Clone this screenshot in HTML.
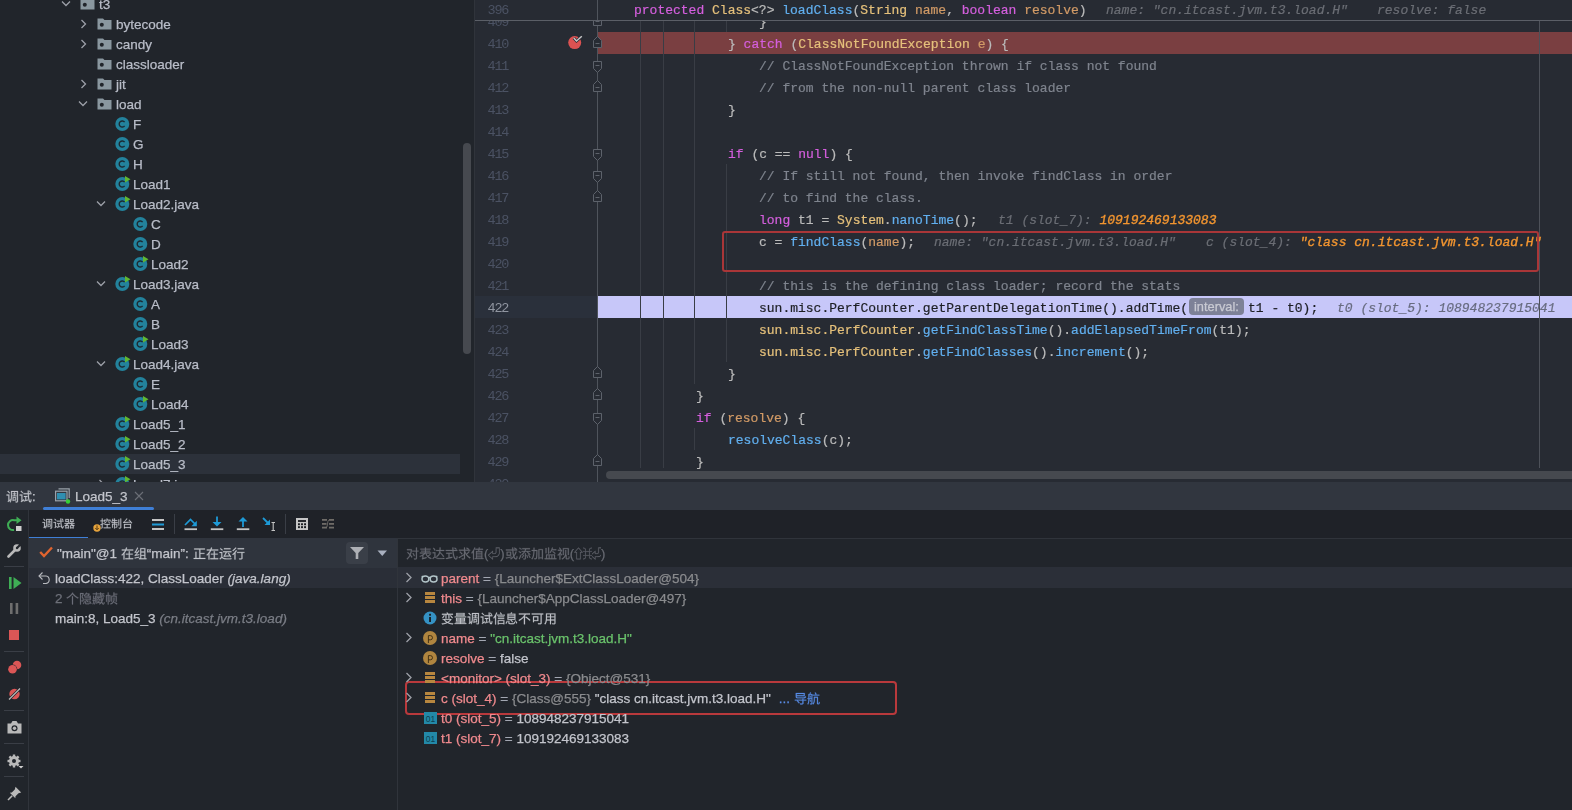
<!DOCTYPE html><html><head><meta charset='utf-8'><style>
*{box-sizing:border-box}
html,body{margin:0;padding:0}
body{width:1572px;height:810px;overflow:hidden;position:relative;background:#21252b;font-family:"Liberation Sans", sans-serif;}
.a{position:absolute}
.t,.m,.ln{will-change:transform}
.t{position:absolute;white-space:pre;font-family:"Liberation Sans", sans-serif;font-size:13.5px;line-height:20px;color:#b9bdc8;margin-top:1px;-webkit-text-stroke:0.25px currentColor}
.m{position:absolute;white-space:pre;font-family:"Liberation Mono", monospace;font-size:13px;line-height:22px;color:#bbbbbb;margin-top:2px;-webkit-text-stroke:0.2px currentColor}
.ln{position:absolute;white-space:pre;font-family:"Liberation Mono", monospace;font-size:13.5px;letter-spacing:-1.3px;line-height:22px;color:#4b5263;text-align:right;width:60px;left:449px;margin-top:2px}
.kw{color:#d55fde} .cl{color:#e5c07b} .fn{color:#61afef} .pr{color:#d19a66} .cm{color:#7f848e} .pl{color:#bbbbbb}
.hint{font-style:italic;color:#6b6e75} .hint2{font-style:italic;color:#686c80} .dk{color:#1d1f24} .hv{font-style:italic;color:#f29530;-webkit-text-stroke:0.35px currentColor}
</style></head><body><div class='a' style='left:0;top:0;width:474px;height:482px;background:#21252b;overflow:hidden'><div class='a' style='left:0;top:454px;width:460px;height:20px;background:#2c313a'></div><div class='a' style='left:463px;top:143px;width:8px;height:211px;border-radius:4px;background:#46494f'></div><svg class='a' style='left:61px;top:0px' width='10' height='7' viewBox='0 0 10 7'><path d='M1 1.5 L5 5.5 L9 1.5' fill='none' stroke='#9da0a8' stroke-width='1.3'/></svg><svg class='a' style='left:80px;top:-2px' width='15' height='12' viewBox='0 0 15 12'><path d='M0.5 0.5 H6 L7.5 2 H14.5 V11.5 H0.5 Z' fill='#8a979f'/><circle cx='4.8' cy='6.8' r='2' fill='#21252b'/></svg><div class='t' style='left:99px;top:-6px'>t3</div><svg class='a' style='left:80px;top:19px' width='7' height='10' viewBox='0 0 7 10'><path d='M1.5 1 L5.5 5 L1.5 9' fill='none' stroke='#9da0a8' stroke-width='1.3'/></svg><svg class='a' style='left:97px;top:18px' width='15' height='12' viewBox='0 0 15 12'><path d='M0.5 0.5 H6 L7.5 2 H14.5 V11.5 H0.5 Z' fill='#8a979f'/><circle cx='4.8' cy='6.8' r='2' fill='#21252b'/></svg><div class='t' style='left:116px;top:14px'>bytecode</div><svg class='a' style='left:80px;top:39px' width='7' height='10' viewBox='0 0 7 10'><path d='M1.5 1 L5.5 5 L1.5 9' fill='none' stroke='#9da0a8' stroke-width='1.3'/></svg><svg class='a' style='left:97px;top:38px' width='15' height='12' viewBox='0 0 15 12'><path d='M0.5 0.5 H6 L7.5 2 H14.5 V11.5 H0.5 Z' fill='#8a979f'/><circle cx='4.8' cy='6.8' r='2' fill='#21252b'/></svg><div class='t' style='left:116px;top:34px'>candy</div><svg class='a' style='left:97px;top:58px' width='15' height='12' viewBox='0 0 15 12'><path d='M0.5 0.5 H6 L7.5 2 H14.5 V11.5 H0.5 Z' fill='#8a979f'/><circle cx='4.8' cy='6.8' r='2' fill='#21252b'/></svg><div class='t' style='left:116px;top:54px'>classloader</div><svg class='a' style='left:80px;top:79px' width='7' height='10' viewBox='0 0 7 10'><path d='M1.5 1 L5.5 5 L1.5 9' fill='none' stroke='#9da0a8' stroke-width='1.3'/></svg><svg class='a' style='left:97px;top:78px' width='15' height='12' viewBox='0 0 15 12'><path d='M0.5 0.5 H6 L7.5 2 H14.5 V11.5 H0.5 Z' fill='#8a979f'/><circle cx='4.8' cy='6.8' r='2' fill='#21252b'/></svg><div class='t' style='left:116px;top:74px'>jit</div><svg class='a' style='left:78px;top:100px' width='10' height='7' viewBox='0 0 10 7'><path d='M1 1.5 L5 5.5 L9 1.5' fill='none' stroke='#9da0a8' stroke-width='1.3'/></svg><svg class='a' style='left:97px;top:98px' width='15' height='12' viewBox='0 0 15 12'><path d='M0.5 0.5 H6 L7.5 2 H14.5 V11.5 H0.5 Z' fill='#8a979f'/><circle cx='4.8' cy='6.8' r='2' fill='#21252b'/></svg><div class='t' style='left:116px;top:94px'>load</div><svg class='a' style='left:115px;top:116px' width='16' height='16' viewBox='0 0 16 16'><circle cx='7.3' cy='8' r='7' fill='#23829c'/><path d='M9.6 6.2 A3 3 0 1 0 9.6 9.8' fill='none' stroke='#1c2a33' stroke-width='1.4'/></svg><div class='t' style='left:133px;top:114px'>F</div><svg class='a' style='left:115px;top:136px' width='16' height='16' viewBox='0 0 16 16'><circle cx='7.3' cy='8' r='7' fill='#23829c'/><path d='M9.6 6.2 A3 3 0 1 0 9.6 9.8' fill='none' stroke='#1c2a33' stroke-width='1.4'/></svg><div class='t' style='left:133px;top:134px'>G</div><svg class='a' style='left:115px;top:156px' width='16' height='16' viewBox='0 0 16 16'><circle cx='7.3' cy='8' r='7' fill='#23829c'/><path d='M9.6 6.2 A3 3 0 1 0 9.6 9.8' fill='none' stroke='#1c2a33' stroke-width='1.4'/></svg><div class='t' style='left:133px;top:154px'>H</div><svg class='a' style='left:115px;top:176px' width='16' height='16' viewBox='0 0 16 16'><circle cx='7.3' cy='8' r='7' fill='#23829c'/><path d='M9.6 6.2 A3 3 0 1 0 9.6 9.8' fill='none' stroke='#1c2a33' stroke-width='1.4'/><path d='M10 0 L15.5 3.2 L10 6.4 Z' fill='#5fb832'/></svg><div class='t' style='left:133px;top:174px'>Load1</div><svg class='a' style='left:96px;top:200px' width='10' height='7' viewBox='0 0 10 7'><path d='M1 1.5 L5 5.5 L9 1.5' fill='none' stroke='#9da0a8' stroke-width='1.3'/></svg><svg class='a' style='left:115px;top:196px' width='16' height='16' viewBox='0 0 16 16'><circle cx='7.3' cy='8' r='7' fill='#23829c'/><path d='M9.6 6.2 A3 3 0 1 0 9.6 9.8' fill='none' stroke='#1c2a33' stroke-width='1.4'/><path d='M10 0 L15.5 3.2 L10 6.4 Z' fill='#5fb832'/></svg><div class='t' style='left:133px;top:194px'>Load2.java</div><svg class='a' style='left:133px;top:216px' width='16' height='16' viewBox='0 0 16 16'><circle cx='7.3' cy='8' r='7' fill='#23829c'/><path d='M9.6 6.2 A3 3 0 1 0 9.6 9.8' fill='none' stroke='#1c2a33' stroke-width='1.4'/></svg><div class='t' style='left:151px;top:214px'>C</div><svg class='a' style='left:133px;top:236px' width='16' height='16' viewBox='0 0 16 16'><circle cx='7.3' cy='8' r='7' fill='#23829c'/><path d='M9.6 6.2 A3 3 0 1 0 9.6 9.8' fill='none' stroke='#1c2a33' stroke-width='1.4'/></svg><div class='t' style='left:151px;top:234px'>D</div><svg class='a' style='left:133px;top:256px' width='16' height='16' viewBox='0 0 16 16'><circle cx='7.3' cy='8' r='7' fill='#23829c'/><path d='M9.6 6.2 A3 3 0 1 0 9.6 9.8' fill='none' stroke='#1c2a33' stroke-width='1.4'/><path d='M10 0 L15.5 3.2 L10 6.4 Z' fill='#5fb832'/></svg><div class='t' style='left:151px;top:254px'>Load2</div><svg class='a' style='left:96px;top:280px' width='10' height='7' viewBox='0 0 10 7'><path d='M1 1.5 L5 5.5 L9 1.5' fill='none' stroke='#9da0a8' stroke-width='1.3'/></svg><svg class='a' style='left:115px;top:276px' width='16' height='16' viewBox='0 0 16 16'><circle cx='7.3' cy='8' r='7' fill='#23829c'/><path d='M9.6 6.2 A3 3 0 1 0 9.6 9.8' fill='none' stroke='#1c2a33' stroke-width='1.4'/><path d='M10 0 L15.5 3.2 L10 6.4 Z' fill='#5fb832'/></svg><div class='t' style='left:133px;top:274px'>Load3.java</div><svg class='a' style='left:133px;top:296px' width='16' height='16' viewBox='0 0 16 16'><circle cx='7.3' cy='8' r='7' fill='#23829c'/><path d='M9.6 6.2 A3 3 0 1 0 9.6 9.8' fill='none' stroke='#1c2a33' stroke-width='1.4'/></svg><div class='t' style='left:151px;top:294px'>A</div><svg class='a' style='left:133px;top:316px' width='16' height='16' viewBox='0 0 16 16'><circle cx='7.3' cy='8' r='7' fill='#23829c'/><path d='M9.6 6.2 A3 3 0 1 0 9.6 9.8' fill='none' stroke='#1c2a33' stroke-width='1.4'/></svg><div class='t' style='left:151px;top:314px'>B</div><svg class='a' style='left:133px;top:336px' width='16' height='16' viewBox='0 0 16 16'><circle cx='7.3' cy='8' r='7' fill='#23829c'/><path d='M9.6 6.2 A3 3 0 1 0 9.6 9.8' fill='none' stroke='#1c2a33' stroke-width='1.4'/><path d='M10 0 L15.5 3.2 L10 6.4 Z' fill='#5fb832'/></svg><div class='t' style='left:151px;top:334px'>Load3</div><svg class='a' style='left:96px;top:360px' width='10' height='7' viewBox='0 0 10 7'><path d='M1 1.5 L5 5.5 L9 1.5' fill='none' stroke='#9da0a8' stroke-width='1.3'/></svg><svg class='a' style='left:115px;top:356px' width='16' height='16' viewBox='0 0 16 16'><circle cx='7.3' cy='8' r='7' fill='#23829c'/><path d='M9.6 6.2 A3 3 0 1 0 9.6 9.8' fill='none' stroke='#1c2a33' stroke-width='1.4'/><path d='M10 0 L15.5 3.2 L10 6.4 Z' fill='#5fb832'/></svg><div class='t' style='left:133px;top:354px'>Load4.java</div><svg class='a' style='left:133px;top:376px' width='16' height='16' viewBox='0 0 16 16'><circle cx='7.3' cy='8' r='7' fill='#23829c'/><path d='M9.6 6.2 A3 3 0 1 0 9.6 9.8' fill='none' stroke='#1c2a33' stroke-width='1.4'/></svg><div class='t' style='left:151px;top:374px'>E</div><svg class='a' style='left:133px;top:396px' width='16' height='16' viewBox='0 0 16 16'><circle cx='7.3' cy='8' r='7' fill='#23829c'/><path d='M9.6 6.2 A3 3 0 1 0 9.6 9.8' fill='none' stroke='#1c2a33' stroke-width='1.4'/><path d='M10 0 L15.5 3.2 L10 6.4 Z' fill='#5fb832'/></svg><div class='t' style='left:151px;top:394px'>Load4</div><svg class='a' style='left:115px;top:416px' width='16' height='16' viewBox='0 0 16 16'><circle cx='7.3' cy='8' r='7' fill='#23829c'/><path d='M9.6 6.2 A3 3 0 1 0 9.6 9.8' fill='none' stroke='#1c2a33' stroke-width='1.4'/><path d='M10 0 L15.5 3.2 L10 6.4 Z' fill='#5fb832'/></svg><div class='t' style='left:133px;top:414px'>Load5_1</div><svg class='a' style='left:115px;top:436px' width='16' height='16' viewBox='0 0 16 16'><circle cx='7.3' cy='8' r='7' fill='#23829c'/><path d='M9.6 6.2 A3 3 0 1 0 9.6 9.8' fill='none' stroke='#1c2a33' stroke-width='1.4'/><path d='M10 0 L15.5 3.2 L10 6.4 Z' fill='#5fb832'/></svg><div class='t' style='left:133px;top:434px'>Load5_2</div><svg class='a' style='left:115px;top:456px' width='16' height='16' viewBox='0 0 16 16'><circle cx='7.3' cy='8' r='7' fill='#23829c'/><path d='M9.6 6.2 A3 3 0 1 0 9.6 9.8' fill='none' stroke='#1c2a33' stroke-width='1.4'/><path d='M10 0 L15.5 3.2 L10 6.4 Z' fill='#5fb832'/></svg><div class='t' style='left:133px;top:454px'>Load5_3</div><svg class='a' style='left:98px;top:479px' width='7' height='10' viewBox='0 0 7 10'><path d='M1.5 1 L5.5 5 L1.5 9' fill='none' stroke='#9da0a8' stroke-width='1.3'/></svg><svg class='a' style='left:115px;top:476px' width='16' height='16' viewBox='0 0 16 16'><circle cx='7.3' cy='8' r='7' fill='#23829c'/><path d='M9.6 6.2 A3 3 0 1 0 9.6 9.8' fill='none' stroke='#1c2a33' stroke-width='1.4'/><path d='M10 0 L15.5 3.2 L10 6.4 Z' fill='#5fb832'/></svg><div class='t' style='left:133px;top:474px'>Load7.java</div></div><div class='a' style='left:474px;top:0;width:1px;height:482px;background:#30343b'></div><div class='a' style='left:475px;top:0;width:1097px;height:482px;background:#272b33;overflow:hidden'><div class='a' style='left:123px;top:32px;width:1000px;height:22px;background:#7a3f41'></div><div class='a' style='left:0px;top:296px;width:122px;height:22px;background:#2a303b'></div><div class='a' style='left:123px;top:296px;width:1000px;height:22px;background:#c7c7f9'></div><div class='a' style='left:165px;top:20px;width:1px;height:448px;background:#393d45'></div><div class='a' style='left:188px;top:20px;width:1px;height:448px;background:#393d45'></div><div class='a' style='left:219px;top:20px;width:1px;height:364px;background:#393d45'></div><div class='a' style='left:219px;top:428px;width:1px;height:22px;background:#393d45'></div><div class='a' style='left:251px;top:20px;width:1px;height:12px;background:#393d45'></div><div class='a' style='left:251px;top:164px;width:1px;height:198px;background:#393d45'></div><div class='a' style='left:1064px;top:20px;width:1px;height:448px;background:#4d5159'></div><div class='a' style='left:122px;top:0px;width:1px;height:482px;background:#4f545c'></div><svg class='a' style='left:117px;top:14px' width='11' height='13' viewBox='0 0 11 13'><path d='M1.5 4.5 L5.5 0.5 L9.5 4.5 V11.5 H1.5 Z' fill='#272b33' stroke='#5d626b' stroke-width='1'/><path d='M3.5 7.5 H7.5' stroke='#5d626b' stroke-width='1'/></svg><svg class='a' style='left:117px;top:36px' width='11' height='13' viewBox='0 0 11 13'><path d='M1.5 4.5 L5.5 0.5 L9.5 4.5 V11.5 H1.5 Z' fill='#272b33' stroke='#5d626b' stroke-width='1'/><path d='M3.5 7.5 H7.5' stroke='#5d626b' stroke-width='1'/></svg><svg class='a' style='left:117px;top:80px' width='11' height='13' viewBox='0 0 11 13'><path d='M1.5 4.5 L5.5 0.5 L9.5 4.5 V11.5 H1.5 Z' fill='#272b33' stroke='#5d626b' stroke-width='1'/><path d='M3.5 7.5 H7.5' stroke='#5d626b' stroke-width='1'/></svg><svg class='a' style='left:117px;top:190px' width='11' height='13' viewBox='0 0 11 13'><path d='M1.5 4.5 L5.5 0.5 L9.5 4.5 V11.5 H1.5 Z' fill='#272b33' stroke='#5d626b' stroke-width='1'/><path d='M3.5 7.5 H7.5' stroke='#5d626b' stroke-width='1'/></svg><svg class='a' style='left:117px;top:366px' width='11' height='13' viewBox='0 0 11 13'><path d='M1.5 4.5 L5.5 0.5 L9.5 4.5 V11.5 H1.5 Z' fill='#272b33' stroke='#5d626b' stroke-width='1'/><path d='M3.5 7.5 H7.5' stroke='#5d626b' stroke-width='1'/></svg><svg class='a' style='left:117px;top:388px' width='11' height='13' viewBox='0 0 11 13'><path d='M1.5 4.5 L5.5 0.5 L9.5 4.5 V11.5 H1.5 Z' fill='#272b33' stroke='#5d626b' stroke-width='1'/><path d='M3.5 7.5 H7.5' stroke='#5d626b' stroke-width='1'/></svg><svg class='a' style='left:117px;top:454px' width='11' height='13' viewBox='0 0 11 13'><path d='M1.5 4.5 L5.5 0.5 L9.5 4.5 V11.5 H1.5 Z' fill='#272b33' stroke='#5d626b' stroke-width='1'/><path d='M3.5 7.5 H7.5' stroke='#5d626b' stroke-width='1'/></svg><svg class='a' style='left:117px;top:61px' width='11' height='13' viewBox='0 0 11 13'><path d='M1.5 0.5 H9.5 V7.5 L5.5 11.5 L1.5 7.5 Z' fill='#272b33' stroke='#5d626b' stroke-width='1'/><path d='M3.5 4.5 H7.5' stroke='#5d626b' stroke-width='1'/></svg><svg class='a' style='left:117px;top:149px' width='11' height='13' viewBox='0 0 11 13'><path d='M1.5 0.5 H9.5 V7.5 L5.5 11.5 L1.5 7.5 Z' fill='#272b33' stroke='#5d626b' stroke-width='1'/><path d='M3.5 4.5 H7.5' stroke='#5d626b' stroke-width='1'/></svg><svg class='a' style='left:117px;top:171px' width='11' height='13' viewBox='0 0 11 13'><path d='M1.5 0.5 H9.5 V7.5 L5.5 11.5 L1.5 7.5 Z' fill='#272b33' stroke='#5d626b' stroke-width='1'/><path d='M3.5 4.5 H7.5' stroke='#5d626b' stroke-width='1'/></svg><svg class='a' style='left:117px;top:413px' width='11' height='13' viewBox='0 0 11 13'><path d='M1.5 0.5 H9.5 V7.5 L5.5 11.5 L1.5 7.5 Z' fill='#272b33' stroke='#5d626b' stroke-width='1'/><path d='M3.5 4.5 H7.5' stroke='#5d626b' stroke-width='1'/></svg><div class='ln' style='left:-27.5px;top:10px;color:#4b5263'>409</div><div class='ln' style='left:-27.5px;top:32px;color:#4b5263'>410</div><div class='ln' style='left:-27.5px;top:54px;color:#4b5263'>411</div><div class='ln' style='left:-27.5px;top:76px;color:#4b5263'>412</div><div class='ln' style='left:-27.5px;top:98px;color:#4b5263'>413</div><div class='ln' style='left:-27.5px;top:120px;color:#4b5263'>414</div><div class='ln' style='left:-27.5px;top:142px;color:#4b5263'>415</div><div class='ln' style='left:-27.5px;top:164px;color:#4b5263'>416</div><div class='ln' style='left:-27.5px;top:186px;color:#4b5263'>417</div><div class='ln' style='left:-27.5px;top:208px;color:#4b5263'>418</div><div class='ln' style='left:-27.5px;top:230px;color:#4b5263'>419</div><div class='ln' style='left:-27.5px;top:252px;color:#4b5263'>420</div><div class='ln' style='left:-27.5px;top:274px;color:#4b5263'>421</div><div class='ln' style='left:-27.5px;top:296px;color:#9095a0'>422</div><div class='ln' style='left:-27.5px;top:318px;color:#4b5263'>423</div><div class='ln' style='left:-27.5px;top:340px;color:#4b5263'>424</div><div class='ln' style='left:-27.5px;top:362px;color:#4b5263'>425</div><div class='ln' style='left:-27.5px;top:384px;color:#4b5263'>426</div><div class='ln' style='left:-27.5px;top:406px;color:#4b5263'>427</div><div class='ln' style='left:-27.5px;top:428px;color:#4b5263'>428</div><div class='ln' style='left:-27.5px;top:450px;color:#4b5263'>429</div><div class='ln' style='left:-27.5px;top:472px;color:#4b5263'>430</div><div class='m' style='left:283.8px;top:10px'><span class='pl'>}</span></div><div class='m' style='left:252.6px;top:32px'><span class='pl'>} </span><span class='kw'>catch</span><span class='pl'> (</span><span class='cl'>ClassNotFoundException</span><span class='pr'> e</span><span class='pl'>) {</span></div><div class='m' style='left:283.8px;top:54px'><span class='cm'>// ClassNotFoundException thrown if class not found</span></div><div class='m' style='left:283.8px;top:76px'><span class='cm'>// from the non-null parent class loader</span></div><div class='m' style='left:252.6px;top:98px'><span class='pl'>}</span></div><div class='m' style='left:252.6px;top:142px'><span class='kw'>if</span><span class='pl'> (c == </span><span class='kw'>null</span><span class='pl'>) {</span></div><div class='m' style='left:283.8px;top:164px'><span class='cm'>// If still not found, then invoke findClass in order</span></div><div class='m' style='left:283.8px;top:186px'><span class='cm'>// to find the class.</span></div><div class='m' style='left:283.8px;top:208px'><span class='kw'>long</span><span class='pl'> t1 = </span><span class='cl'>System</span><span class='pl'>.</span><span class='fn'>nanoTime</span><span class='pl'>();</span></div><div class='m' style='left:283.8px;top:230px'><span class='pl'>c = </span><span class='fn'>findClass</span><span class='pl'>(</span><span class='pr'>name</span><span class='pl'>);</span></div><div class='m' style='left:283.8px;top:274px'><span class='cm'>// this is the defining class loader; record the stats</span></div><div class='m' style='left:283.8px;top:296px'><span class='dk'>sun.misc.PerfCounter.getParentDelegationTime().addTime(</span></div><div class='m' style='left:283.8px;top:318px'><span class='cl'>sun.misc.PerfCounter</span><span class='pl'>.</span><span class='fn'>getFindClassTime</span><span class='pl'>().</span><span class='fn'>addElapsedTimeFrom</span><span class='pl'>(t1);</span></div><div class='m' style='left:283.8px;top:340px'><span class='cl'>sun.misc.PerfCounter</span><span class='pl'>.</span><span class='fn'>getFindClasses</span><span class='pl'>().</span><span class='fn'>increment</span><span class='pl'>();</span></div><div class='m' style='left:252.6px;top:362px'><span class='pl'>}</span></div><div class='m' style='left:221.4px;top:384px'><span class='pl'>}</span></div><div class='m' style='left:221.4px;top:406px'><span class='kw'>if</span><span class='pl'> (</span><span class='pr'>resolve</span><span class='pl'>) {</span></div><div class='m' style='left:252.6px;top:428px'><span class='fn'>resolveClass</span><span class='pl'>(c);</span></div><div class='m' style='left:221.4px;top:450px'><span class='pl'>}</span></div><div class='m' style='left:522.5px;top:208px'><span class='hint'>t1 (slot_7): </span><span class='hv'>109192469133083</span></div><div class='m' style='left:459.4px;top:230px'><span class='hint'>name: "cn.itcast.jvm.t3.load.H"</span></div><div class='m' style='left:730.6px;top:230px'><span class='hint'>c (slot_4): </span><span class='hv'>"class cn.itcast.jvm.t3.load.H"</span></div><div class='a' style='left:714px;top:298px;width:55px;height:17px;border-radius:4px;background:#7d8197'></div><div class='t' style='left:719px;top:296px;font-size:12.8px;color:#c9cad3'>interval:</div><div class='m' style='left:772.5px;top:296px'><span class='dk'>t1 - t0);</span></div><div class='m' style='left:861.6px;top:296px'><span class='hint2'>t0 (slot_5): 108948237915041</span></div><div class='a' style='left:247px;top:231px;width:817px;height:41px;border:2px solid #a93638;border-radius:3px'></div><div class='a' style='left:0;top:0;width:1097px;height:20px;background:#272b33'></div><div class='a' style='left:122px;top:0px;width:1px;height:20px;background:#4f545c'></div><div class='a' style='left:0;top:20px;width:1097px;height:1px;background:#5b5f67'></div><div class='ln' style='left:-27.5px;top:-2px'>396</div><div class='m' style='left:159.0px;top:-2px'><span class='kw'>protected</span> <span class='cl'>Class</span><span class='pl'>&lt;?&gt; </span><span class='fn'>loadClass</span><span class='pl'>(</span><span class='cl'>String</span><span class='pr'> name</span><span class='pl'>, </span><span class='kw'>boolean</span><span class='pr'> resolve</span><span class='pl'>)</span></div><div class='m' style='left:630.5px;top:-2px'><span class='hint'>name: "cn.itcast.jvm.t3.load.H"</span></div><div class='m' style='left:901.6px;top:-2px'><span class='hint'>resolve: false</span></div><svg class='a' style='left:92px;top:34px' width='18' height='16' viewBox='0 0 18 16'><circle cx='7.7' cy='8.6' r='6.5' fill='#db5252'/><path d='M6.8 4 L9.5 7 L14.8 2.3' fill='none' stroke='#272b33' stroke-width='3'/><path d='M6.8 4 L9.5 7 L14.8 2.3' fill='none' stroke='#c6c6c8' stroke-width='1.5'/></svg><div class='a' style='left:131px;top:471px;width:1000px;height:8px;border-radius:4px;background:#46494f'></div></div><div class='a' style='left:0;top:482px;width:1572px;height:28px;background:#31363f'></div><div class='t' style='left:6px;top:486px;font-size:13px;color:#c3c5cc'><svg style='display:inline-block;vertical-align:-1.56px' width='13' height='13' viewBox='0 0 1000 1000'><path d='M105 108C159 154 226 221 256 265L309 212C277 170 209 106 154 62ZM43 354V426H184V773C184 826 148 865 128 881C142 892 166 917 175 932C188 915 212 895 345 789C331 836 311 880 283 919C298 927 327 948 338 959C436 823 450 612 450 458V152H856V869C856 884 851 889 836 889C822 890 775 890 723 888C733 907 744 938 747 957C818 957 861 956 888 945C915 932 924 910 924 870V85H383V458C383 553 380 664 352 767C344 752 335 731 330 716L257 772V354ZM620 182V266H512V324H620V426H490V483H818V426H681V324H793V266H681V182ZM512 565V845H570V799H781V565ZM570 621H723V742H570Z' fill='currentColor' stroke='currentColor' stroke-width='18'/></svg><svg style='display:inline-block;vertical-align:-1.56px' width='13' height='13' viewBox='0 0 1000 1000'><path d='M120 105C171 149 235 213 265 254L317 202C287 162 222 102 170 59ZM777 84C819 128 865 189 885 229L940 192C918 153 871 95 829 52ZM50 354V426H189V786C189 829 159 858 141 869C154 884 172 916 179 934C194 916 221 898 392 783C385 768 376 739 371 719L260 791V354ZM671 45 677 248H346V320H680C698 697 745 954 869 957C907 957 947 915 967 746C953 740 921 720 907 705C901 803 889 859 871 859C809 856 770 629 754 320H959V248H751C749 183 747 115 747 45ZM360 819 381 890C465 865 574 833 679 802L669 735L552 768V536H646V466H378V536H483V787Z' fill='currentColor' stroke='currentColor' stroke-width='18'/></svg>:</div><svg class='a' style='left:55px;top:488px' width='17' height='16' viewBox='0 0 17 16'><path d='M3.5 0.8 H14.2 V10' fill='none' stroke='#9aa3ab' stroke-width='1.2'/><rect x='0.6' y='3.2' width='11.4' height='9.6' fill='none' stroke='#9aa3ab' stroke-width='1.2'/><rect x='2' y='5' width='8.6' height='6.4' fill='#2f8fb0'/><circle cx='13' cy='13.5' r='2.2' fill='#35d035'/></svg><div class='t' style='left:75px;top:486px;color:#c3c5cc'>Load5_3</div><svg class='a' style='left:134px;top:491px' width='10' height='10' viewBox='0 0 10 10'><path d='M1 1 L9 9 M9 1 L1 9' stroke='#6b6f77' stroke-width='1.1'/></svg><div class='a' style='left:43px;top:507px;width:111px;height:3px;border-radius:2px;background:#3f7fd6'></div><div class='a' style='left:28px;top:510px;width:1px;height:300px;background:#30343b'></div><div class='a' style='left:4px;top:566px;width:20px;height:1px;background:#3a3e46'></div><div class='a' style='left:4px;top:651px;width:20px;height:1px;background:#3a3e46'></div><div class='a' style='left:4px;top:710px;width:20px;height:1px;background:#3a3e46'></div><div class='a' style='left:4px;top:743px;width:20px;height:1px;background:#3a3e46'></div><div class='a' style='left:4px;top:776px;width:20px;height:1px;background:#3a3e46'></div><svg class='a' style='left:7px;top:516px' width='16' height='16' viewBox='0 0 16 16'><path d='M10.5 4.2 H7 A5 5 0 1 0 7 14' fill='none' stroke='#3fae55' stroke-width='2'/><path d='M9.5 0.5 L14.5 4.3 L9.5 8 Z' fill='#3fae55'/><rect x='9' y='10' width='5.5' height='5' fill='#cfcfcf'/></svg><svg class='a' style='left:7px;top:543px' width='15' height='15' viewBox='0 0 15 15'><path d='M1.5 13.5 L8 7' stroke='#b9b9b9' stroke-width='2.6' stroke-linecap='round'/><circle cx='10' cy='5' r='3.8' fill='#b9b9b9'/><path d='M10 5 L14 1' stroke='#21252b' stroke-width='2.2'/><circle cx='10' cy='5' r='1.2' fill='#21252b'/></svg><svg class='a' style='left:9px;top:577px' width='13' height='12' viewBox='0 0 13 12'><rect x='0' y='0' width='2.6' height='12' fill='#3fae55'/><path d='M4.5 0 L12.5 6 L4.5 12 Z' fill='#3fae55'/></svg><svg class='a' style='left:10px;top:603px' width='9' height='11' viewBox='0 0 9 11'><rect x='0' y='0' width='2.6' height='11' fill='#6e6e6e'/><rect x='5.6' y='0' width='2.6' height='11' fill='#6e6e6e'/></svg><div class='a' style='left:9px;top:630px;width:10px;height:10px;background:#db5656'></div><svg class='a' style='left:7px;top:660px' width='15' height='15' viewBox='0 0 15 15'><circle cx='10' cy='5' r='4.3' fill='#db5656'/><circle cx='5.5' cy='9.3' r='4.8' fill='#21252b'/><circle cx='5.5' cy='9.3' r='4.3' fill='#db5656'/></svg><svg class='a' style='left:7px;top:687px' width='15' height='14' viewBox='0 0 15 14'><circle cx='7.5' cy='7' r='5.2' fill='#db5656'/><path d='M2 12.5 L13 1.5' stroke='#21252b' stroke-width='2.6'/><path d='M2 12.5 L13 1.5' stroke='#b9b9b9' stroke-width='1.2'/></svg><svg class='a' style='left:7px;top:720px' width='15' height='14' viewBox='0 0 15 14'><path d='M0.5 3.5 H4 L5.5 1 H9.5 L11 3.5 H14.5 V13.5 H0.5 Z' fill='#b9b9b9'/><circle cx='7.5' cy='8.2' r='3' fill='#21252b'/><circle cx='7.5' cy='8.2' r='1.7' fill='#b9b9b9'/></svg><svg class='a' style='left:7px;top:754px' width='17' height='16' viewBox='0 0 17 16'><g fill='#b9b9b9'><circle cx='7' cy='7' r='5'/><rect x='5.8' y='0.5' width='2.4' height='13'/><rect x='0.5' y='5.8' width='13' height='2.4'/><rect x='5.8' y='0.5' width='2.4' height='13' transform='rotate(45 7 7)'/><rect x='5.8' y='0.5' width='2.4' height='13' transform='rotate(-45 7 7)'/></g><circle cx='7' cy='7' r='2' fill='#21252b'/><path d='M11.5 12 H16.5 L14 14.5 Z' fill='#d0d0d0'/></svg><svg class='a' style='left:7px;top:786px' width='15' height='15' viewBox='0 0 15 15'><path d='M8.5 0.8 L14.2 6.5 L11.5 7.2 L8.5 10.2 L8.3 12.2 L2.8 6.7 L4.8 6.5 L7.8 3.5 Z' fill='#b9b9b9'/><path d='M1 14 L5.2 9.8' stroke='#b9b9b9' stroke-width='1.6'/></svg><div class='a' style='left:29px;top:510px;width:1543px;height:28px;background:#1f2228'></div><div class='t' style='left:42px;top:513px;font-size:11px;color:#c3c5cc'><svg style='display:inline-block;vertical-align:-1.32px' width='11' height='11' viewBox='0 0 1000 1000'><path d='M105 108C159 154 226 221 256 265L309 212C277 170 209 106 154 62ZM43 354V426H184V773C184 826 148 865 128 881C142 892 166 917 175 932C188 915 212 895 345 789C331 836 311 880 283 919C298 927 327 948 338 959C436 823 450 612 450 458V152H856V869C856 884 851 889 836 889C822 890 775 890 723 888C733 907 744 938 747 957C818 957 861 956 888 945C915 932 924 910 924 870V85H383V458C383 553 380 664 352 767C344 752 335 731 330 716L257 772V354ZM620 182V266H512V324H620V426H490V483H818V426H681V324H793V266H681V182ZM512 565V845H570V799H781V565ZM570 621H723V742H570Z' fill='currentColor' stroke='currentColor' stroke-width='18'/></svg><svg style='display:inline-block;vertical-align:-1.32px' width='11' height='11' viewBox='0 0 1000 1000'><path d='M120 105C171 149 235 213 265 254L317 202C287 162 222 102 170 59ZM777 84C819 128 865 189 885 229L940 192C918 153 871 95 829 52ZM50 354V426H189V786C189 829 159 858 141 869C154 884 172 916 179 934C194 916 221 898 392 783C385 768 376 739 371 719L260 791V354ZM671 45 677 248H346V320H680C698 697 745 954 869 957C907 957 947 915 967 746C953 740 921 720 907 705C901 803 889 859 871 859C809 856 770 629 754 320H959V248H751C749 183 747 115 747 45ZM360 819 381 890C465 865 574 833 679 802L669 735L552 768V536H646V466H378V536H483V787Z' fill='currentColor' stroke='currentColor' stroke-width='18'/></svg><svg style='display:inline-block;vertical-align:-1.32px' width='11' height='11' viewBox='0 0 1000 1000'><path d='M196 150H366V291H196ZM622 150H802V291H622ZM614 396C656 412 706 437 740 460H452C475 428 495 395 511 362L437 348V85H128V356H431C415 391 392 426 364 460H52V527H298C230 587 141 641 30 682C45 696 64 722 72 739L128 715V960H198V931H365V954H437V651H246C305 613 355 571 396 527H582C624 573 679 616 739 651H555V960H624V931H802V954H875V716L924 732C934 714 955 686 972 672C863 646 751 592 675 527H949V460H774L801 431C768 405 704 374 653 356ZM553 85V356H875V85ZM198 865V717H365V865ZM624 865V717H802V865Z' fill='currentColor' stroke='currentColor' stroke-width='18'/></svg></div><div class='a' style='left:29px;top:537px;width:59px;height:2px;background:#3f7fd6'></div><div class='t' style='left:100px;top:513px;font-size:11px;color:#c3c5cc'><svg style='display:inline-block;vertical-align:-1.32px' width='11' height='11' viewBox='0 0 1000 1000'><path d='M695 327C758 384 843 465 884 511L933 462C889 417 804 340 741 286ZM560 287C513 353 440 420 370 465C384 478 408 508 417 522C489 470 572 389 626 311ZM164 39V234H43V305H164V544C114 561 68 575 32 586L49 661L164 619V864C164 878 159 882 147 882C135 883 96 883 53 882C63 902 72 933 74 951C137 952 177 949 200 938C225 926 234 905 234 864V594L342 555L330 486L234 520V305H338V234H234V39ZM332 860V927H964V860H689V609H893V542H413V609H613V860ZM588 57C602 88 619 128 631 161H367V336H435V227H882V326H954V161H712C700 126 678 78 658 39Z' fill='currentColor' stroke='currentColor' stroke-width='18'/></svg><svg style='display:inline-block;vertical-align:-1.32px' width='11' height='11' viewBox='0 0 1000 1000'><path d='M676 132V686H747V132ZM854 50V857C854 873 849 878 834 878C815 879 759 879 700 877C710 900 721 935 725 956C800 956 855 954 885 942C916 928 928 906 928 856V50ZM142 64C121 161 87 261 41 328C60 335 93 348 108 356C125 327 142 292 158 253H289V358H45V427H289V529H91V878H159V597H289V959H361V597H500V802C500 813 497 816 486 816C475 817 442 817 400 815C409 834 418 861 421 881C476 881 515 880 538 869C563 857 569 838 569 804V529H361V427H604V358H361V253H565V184H361V44H289V184H183C194 150 204 114 212 78Z' fill='currentColor' stroke='currentColor' stroke-width='18'/></svg><svg style='display:inline-block;vertical-align:-1.32px' width='11' height='11' viewBox='0 0 1000 1000'><path d='M179 538V959H255V905H741V957H821V538ZM255 832V610H741V832ZM126 454C165 439 224 437 800 406C825 437 846 466 861 492L925 446C873 362 756 239 658 153L599 193C647 236 699 289 745 340L231 364C320 282 410 179 490 69L415 36C336 160 219 287 183 321C149 354 124 375 101 380C110 400 122 438 126 454Z' fill='currentColor' stroke='currentColor' stroke-width='18'/></svg></div><svg class='a' style='left:93px;top:524px' width='8' height='8' viewBox='0 0 8 8'><circle cx='4' cy='4' r='3.7' fill='#e5a33c'/><path d='M4 1.5 V5.5 M2.3 4 L4 5.8 L5.7 4' fill='none' stroke='#5a3c10' stroke-width='1'/></svg><svg class='a' style='left:152px;top:518px' width='13' height='13' viewBox='0 0 13 13'><rect x='0' y='1' width='12' height='2' fill='#c4c4c4'/><rect x='0' y='5.5' width='12' height='2' fill='#1e9ad6'/><rect x='0' y='10' width='12' height='2' fill='#c4c4c4'/></svg><div class='a' style='left:174px;top:514px;width:1px;height:20px;background:#3a3e46'></div><div class='a' style='left:285px;top:514px;width:1px;height:20px;background:#3a3e46'></div><svg class='a' style='left:184px;top:517px' width='14' height='14' viewBox='0 0 14 14'><path d='M1 8 L6.5 2.5 L11 7' fill='none' stroke='#1e9ad6' stroke-width='1.7'/><path d='M12.8 3.8 V9.2 H7.4 Z' fill='#1e9ad6'/><rect x='0.5' y='11.3' width='12.5' height='1.8' fill='#c4c4c4'/></svg><svg class='a' style='left:210px;top:516px' width='14' height='15' viewBox='0 0 14 15'><path d='M7 0.5 V9' stroke='#1e9ad6' stroke-width='1.8'/><path d='M2.5 6 L7 10.5 L11.5 6 Z' fill='#1e9ad6'/><rect x='0.8' y='12.3' width='12.5' height='1.8' fill='#c4c4c4'/></svg><svg class='a' style='left:236px;top:516px' width='14' height='15' viewBox='0 0 14 15'><path d='M7 4 V11' stroke='#1e9ad6' stroke-width='1.8'/><path d='M2.5 5.5 L7 1 L11.5 5.5 Z' fill='#1e9ad6'/><rect x='0.8' y='12.3' width='12.5' height='1.8' fill='#c4c4c4'/></svg><svg class='a' style='left:262px;top:517px' width='16' height='15' viewBox='0 0 16 15'><path d='M1 1 L6 6' stroke='#1e9ad6' stroke-width='1.8'/><path d='M8 2.5 V8 H2.5 Z' fill='#1e9ad6'/><path d='M9.5 5.5 H13 M11.2 5.5 V13.5 M9.5 13.5 H13' stroke='#c4c4c4' stroke-width='1.1'/></svg><svg class='a' style='left:296px;top:518px' width='12' height='12' viewBox='0 0 12 12'><rect x='0' y='0' width='12' height='12' fill='#c6c6c6'/><rect x='2' y='2.1' width='8' height='1.8' fill='#16181c'/><g fill='#16181c'><rect x='2' y='5.3' width='1.9' height='1.9'/><rect x='5.05' y='5.3' width='1.9' height='1.9'/><rect x='8.1' y='5.3' width='1.9' height='1.9'/><rect x='2' y='8.2' width='1.9' height='1.9'/><rect x='5.05' y='8.2' width='1.9' height='1.9'/><rect x='8.1' y='8.2' width='1.9' height='1.9'/></g></svg><svg class='a' style='left:322px;top:518px' width='13' height='12' viewBox='0 0 13 12'><g fill='#6f6c68'><rect x='0' y='1' width='5' height='1.8'/><rect x='7' y='1' width='5' height='1.8'/><rect x='0' y='5' width='4.5' height='1.8'/><rect x='7' y='5' width='5' height='1.8'/><rect x='0' y='8.7' width='5' height='1.8'/><rect x='7' y='8.7' width='5' height='1.8'/></g><path d='M7.2 1.9 C5.6 2.2 5.8 5 5.5 6 C5.2 7.2 5.3 9.4 4 9.6' fill='none' stroke='#6f6c68' stroke-width='0.9'/></svg><div class='a' style='left:29px;top:538px;width:368px;height:30px;background:#2f343d'></div><svg class='a' style='left:39px;top:546px' width='14' height='12' viewBox='0 0 14 12'><path d='M1.2 6 L5 10 L13 1.5' fill='none' stroke='#e0642f' stroke-width='2.4'/></svg><div class='t' style='left:57px;top:543px;color:#c3c5cc'>"main"@1 <svg style='display:inline-block;vertical-align:-1.56px' width='13' height='13' viewBox='0 0 1000 1000'><path d='M391 40C377 91 359 144 338 195H63V267H305C241 395 153 514 38 594C50 611 69 643 77 663C119 633 158 599 193 562V956H268V473C315 409 356 339 390 267H939V195H421C439 150 455 104 469 59ZM598 319V512H373V582H598V866H333V936H938V866H673V582H900V512H673V319Z' fill='currentColor' stroke='currentColor' stroke-width='18'/></svg><svg style='display:inline-block;vertical-align:-1.56px' width='13' height='13' viewBox='0 0 1000 1000'><path d='M48 822 63 894C157 870 282 838 401 807L394 743C266 774 134 804 48 822ZM481 90V869H380V938H959V869H872V90ZM553 869V673H798V869ZM553 414H798V606H553ZM553 345V159H798V345ZM66 457C81 450 105 443 242 426C194 492 150 545 130 565C97 602 71 627 49 631C58 649 69 683 73 698C94 686 129 676 401 621C400 606 400 578 402 559L182 599C265 510 346 400 415 289L355 252C334 289 311 325 288 360L143 376C207 290 269 179 318 71L250 40C205 161 126 292 102 325C79 359 60 383 42 387C50 407 62 442 66 457Z' fill='currentColor' stroke='currentColor' stroke-width='18'/></svg>“main”: <svg style='display:inline-block;vertical-align:-1.56px' width='13' height='13' viewBox='0 0 1000 1000'><path d='M188 370V842H52V915H950V842H565V527H878V454H565V187H917V113H90V187H486V842H265V370Z' fill='currentColor' stroke='currentColor' stroke-width='18'/></svg><svg style='display:inline-block;vertical-align:-1.56px' width='13' height='13' viewBox='0 0 1000 1000'><path d='M391 40C377 91 359 144 338 195H63V267H305C241 395 153 514 38 594C50 611 69 643 77 663C119 633 158 599 193 562V956H268V473C315 409 356 339 390 267H939V195H421C439 150 455 104 469 59ZM598 319V512H373V582H598V866H333V936H938V866H673V582H900V512H673V319Z' fill='currentColor' stroke='currentColor' stroke-width='18'/></svg><svg style='display:inline-block;vertical-align:-1.56px' width='13' height='13' viewBox='0 0 1000 1000'><path d='M380 103V174H884V103ZM68 142C127 183 206 241 245 276L297 222C256 187 175 132 118 94ZM375 761C405 748 449 744 825 711L864 787L931 752C892 676 812 545 750 448L688 477C720 528 756 589 789 646L459 671C512 594 565 496 606 402H955V331H314V402H516C478 503 422 600 404 627C383 659 367 682 349 685C358 706 371 745 375 761ZM252 390H42V460H179V779C136 798 86 842 37 895L90 964C139 898 189 838 222 838C245 838 280 871 320 896C391 939 474 951 597 951C705 951 876 946 944 941C945 919 957 880 967 859C864 870 713 878 599 878C488 878 403 871 336 829C297 805 273 785 252 775Z' fill='currentColor' stroke='currentColor' stroke-width='18'/></svg><svg style='display:inline-block;vertical-align:-1.56px' width='13' height='13' viewBox='0 0 1000 1000'><path d='M435 100V172H927V100ZM267 39C216 112 119 201 35 258C48 272 69 301 79 318C169 254 272 156 339 69ZM391 376V448H728V863C728 879 721 884 702 885C684 886 616 886 545 883C556 905 567 936 570 957C668 957 725 957 759 946C792 933 804 910 804 864V448H955V376ZM307 254C238 368 128 484 25 558C40 573 67 606 78 621C115 591 154 555 192 516V963H266V434C308 384 346 332 378 280Z' fill='currentColor' stroke='currentColor' stroke-width='18'/></svg></div><div class='a' style='left:346px;top:542px;width:22px;height:22px;border-radius:4px;background:#3a3f48'></div><svg class='a' style='left:349px;top:546px' width='16' height='14' viewBox='0 0 16 14'><path d='M1 1 H15 L9.3 7 V13 H6.7 V7 Z' fill='#aeb0b5'/></svg><svg class='a' style='left:377px;top:550px' width='11' height='7' viewBox='0 0 11 7'><path d='M0.5 0.5 H10 L5.25 6 Z' fill='#a9b0bf'/></svg><div class='a' style='left:29px;top:568px;width:368px;height:20px;background:#2a2e37'></div><svg class='a' style='left:38px;top:571px' width='13' height='13' viewBox='0 0 13 13'><path d='M1.5 5 H8 A3.8 3.8 0 0 1 8 12.5 H5' fill='none' stroke='#b9bbc0' stroke-width='1.1'/><path d='M4.5 1.5 L1 5 L4.5 8.5' fill='none' stroke='#b9bbc0' stroke-width='1.1'/></svg><div class='t' style='left:55px;top:568px;color:#c3c5cc'>loadClass:422, ClassLoader <i style='color:#c3c5cc'>(java.lang)</i></div><div class='t' style='left:55px;top:588px;color:#6d7079'>2 <svg style='display:inline-block;vertical-align:-1.56px' width='13' height='13' viewBox='0 0 1000 1000'><path d='M460 334V959H538V334ZM506 39C406 206 224 352 35 434C56 452 78 481 91 503C245 428 393 312 501 174C634 330 766 426 914 504C926 480 949 452 969 436C815 361 673 267 545 114L573 70Z' fill='currentColor' stroke='currentColor' stroke-width='18'/></svg><svg style='display:inline-block;vertical-align:-1.56px' width='13' height='13' viewBox='0 0 1000 1000'><path d='M478 712V862C478 932 499 951 586 951C604 951 715 951 733 951C800 951 821 928 829 826C809 822 781 812 767 801C764 878 758 887 726 887C702 887 609 887 592 887C553 887 546 883 546 862V712ZM389 709C373 768 343 846 310 894L367 931C401 877 430 794 447 734ZM541 670C596 710 666 766 700 803L747 757C712 722 642 667 587 631ZM789 720C834 782 880 865 898 921L960 894C940 839 894 758 848 697ZM541 49C506 116 443 201 358 265C374 274 396 295 408 310L410 308V343H829V425H433V482H829V571H404V630H900V284H725C761 243 800 194 826 149L780 119L770 122H574C588 101 600 81 611 61ZM438 284C473 251 505 216 533 180H727C704 216 673 255 647 284ZM81 83V960H148V151H282C260 219 231 310 202 383C274 461 292 528 292 583C292 613 287 640 272 651C263 657 253 659 240 660C224 661 205 660 182 659C193 678 199 707 200 725C223 726 248 725 268 723C289 721 306 715 320 705C348 686 360 644 360 590C360 528 343 457 270 374C303 294 341 192 369 109L321 80L309 83Z' fill='currentColor' stroke='currentColor' stroke-width='18'/></svg><svg style='display:inline-block;vertical-align:-1.56px' width='13' height='13' viewBox='0 0 1000 1000'><path d='M834 409C817 496 792 576 760 647C746 567 735 467 730 347H952V282H888L914 261C895 236 852 204 816 184L771 218C799 235 831 260 852 282H728L727 217H699V174H942V110H699V40H625V110H372V40H298V110H60V174H298V244H372V174H625V246H659L660 282H227V458H144V287H86V552H144V520H227V559V603H41V667H97V711C97 773 88 863 34 928C48 936 69 950 81 960C143 889 153 784 153 713V667H224C219 757 204 854 163 930C179 936 207 951 219 962C282 849 292 682 292 559V347H663C672 506 689 636 713 735C694 766 673 795 650 821V792H537V719H641V532H537V462H641V410H343V904H399V844H629C603 871 574 895 543 916C560 926 588 949 599 962C652 922 698 873 738 818C772 912 818 961 873 961C931 961 956 936 967 802C950 796 928 782 914 769C909 868 899 894 878 895C845 895 810 847 783 748C836 656 875 546 902 421ZM482 792H399V719H482ZM482 532H399V462H482ZM399 581H585V669H399Z' fill='currentColor' stroke='currentColor' stroke-width='18'/></svg><svg style='display:inline-block;vertical-align:-1.56px' width='13' height='13' viewBox='0 0 1000 1000'><path d='M704 821C777 860 869 920 914 962L956 908C910 867 816 811 743 774ZM656 423V602C656 701 632 825 391 901C405 916 426 943 435 960C686 868 727 727 727 602V423ZM486 286V756H551V352H828V754H896V286H722V198H947V130H722V42H649V286ZM76 230V754H135V298H212V960H276V298H356V670C356 678 354 680 348 681C340 681 321 681 297 680C307 698 316 728 318 747C353 747 376 745 393 733C411 721 415 700 415 672V230H276V41H212V230Z' fill='currentColor' stroke='currentColor' stroke-width='18'/></svg></div><div class='t' style='left:55px;top:608px;color:#c3c5cc'>main:8, Load5_3 <i style='color:#7a7d85'>(cn.itcast.jvm.t3.load)</i></div><div class='a' style='left:397px;top:538px;width:1px;height:272px;background:#30343b'></div><div class='a' style='left:398px;top:538px;width:1174px;height:1px;background:#30343b'></div><div class='t' style='left:406px;top:543px;color:#686b73;font-size:13px'><svg style='display:inline-block;vertical-align:-1.56px' width='13' height='13' viewBox='0 0 1000 1000'><path d='M502 486C549 557 594 652 610 712L676 679C660 619 612 527 563 458ZM91 427C152 482 217 547 275 613C215 741 136 838 45 897C63 912 86 940 98 958C190 892 268 800 329 677C374 733 411 786 435 831L495 776C466 724 419 662 364 599C410 484 443 347 460 185L411 171L398 174H70V245H378C363 353 339 450 307 536C254 481 198 427 144 380ZM765 40V281H482V353H765V858C765 876 758 881 741 882C724 882 668 883 605 880C615 903 626 938 630 959C715 959 766 957 796 944C827 931 839 908 839 858V353H959V281H839V40Z' fill='currentColor' stroke='currentColor' stroke-width='18'/></svg><svg style='display:inline-block;vertical-align:-1.56px' width='13' height='13' viewBox='0 0 1000 1000'><path d='M252 959C275 944 312 931 591 842C587 826 581 797 579 776L335 849V629C395 588 449 543 492 495C570 705 710 857 917 926C928 906 950 877 967 861C868 832 783 783 714 718C777 679 850 627 908 578L846 534C802 577 732 631 672 673C628 621 592 561 566 495H934V430H536V341H858V279H536V194H902V129H536V40H460V129H105V194H460V279H156V341H460V430H65V495H397C302 580 160 657 36 697C52 712 74 740 86 758C142 738 201 710 258 677V825C258 865 236 882 219 891C231 907 247 941 252 959Z' fill='currentColor' stroke='currentColor' stroke-width='18'/></svg><svg style='display:inline-block;vertical-align:-1.56px' width='13' height='13' viewBox='0 0 1000 1000'><path d='M80 93C128 153 181 235 202 287L270 250C248 198 193 119 144 61ZM585 43C583 110 582 175 577 237H323V310H569C546 485 487 633 317 720C334 732 357 760 367 778C505 705 577 594 615 461C714 564 821 689 876 771L939 723C876 631 746 488 635 379L645 310H942V237H653C658 174 660 109 662 43ZM262 413H47V485H187V750C142 768 89 815 36 875L87 944C139 872 189 810 222 810C245 810 277 846 319 873C389 920 472 931 599 931C691 931 874 925 941 921C943 899 955 862 964 842C869 853 721 861 601 861C486 861 402 854 336 811C302 789 281 768 262 756Z' fill='currentColor' stroke='currentColor' stroke-width='18'/></svg><svg style='display:inline-block;vertical-align:-1.56px' width='13' height='13' viewBox='0 0 1000 1000'><path d='M709 89C761 125 823 179 853 215L905 168C875 133 811 82 760 47ZM565 44C565 106 567 167 570 227H55V300H575C601 672 685 962 849 962C926 962 954 911 967 736C946 728 918 711 901 694C894 828 883 884 855 884C756 884 678 639 653 300H947V227H649C646 168 645 107 645 44ZM59 856 83 930C211 902 395 860 565 820L559 752L345 798V522H532V449H90V522H270V813Z' fill='currentColor' stroke='currentColor' stroke-width='18'/></svg><svg style='display:inline-block;vertical-align:-1.56px' width='13' height='13' viewBox='0 0 1000 1000'><path d='M117 379C180 436 252 517 283 571L344 526C311 472 237 395 174 340ZM43 791 90 859C193 800 330 718 460 638V858C460 878 453 883 434 884C414 884 349 885 280 882C292 905 303 940 308 962C396 962 456 960 490 947C523 934 537 911 537 858V460C623 645 749 798 912 876C924 856 949 826 967 811C858 764 763 682 687 581C753 524 835 443 896 372L832 326C786 388 711 468 648 525C602 454 565 375 537 294V281H939V208H816L859 159C818 126 737 78 674 46L629 94C690 125 765 173 806 208H537V42H460V208H65V281H460V560C308 647 145 739 43 791Z' fill='currentColor' stroke='currentColor' stroke-width='18'/></svg><svg style='display:inline-block;vertical-align:-1.56px' width='13' height='13' viewBox='0 0 1000 1000'><path d='M599 40C596 70 591 106 586 142H329V209H574C568 243 562 275 555 302H382V866H286V931H958V866H869V302H623C631 275 639 243 646 209H928V142H661L679 45ZM450 866V783H799V866ZM450 501H799V587H450ZM450 445V361H799V445ZM450 641H799V728H450ZM264 41C211 193 124 342 32 440C45 458 66 497 74 514C103 482 132 445 159 405V960H229V291C269 219 304 141 333 63Z' fill='currentColor' stroke='currentColor' stroke-width='18'/></svg>(<svg style='display:inline-block;vertical-align:-1.56px' width='12' height='13' viewBox='38 0 923 1000'><path d='M931 378V47H638V381C638 460 612 488 530 488C445 488 416 488 416 488C416 488 416 457 416 288L25 632L416 973C416 806 416 775 416 775C416 775 445 775 530 775C576 775 635 774 691 760C748 746 794 722 831 686C871 648 899 597 915 534C929 476 931 417 931 378ZM678 87H891C891 87 891 122 891 378C891 469 881 582 804 657C736 722 646 735 530 735H376C376 837 376 886 376 886C325 842 114 656 85 632C113 608 325 420 376 376C376 376 376 425 376 528H530C583 528 620 517 643 493C667 469 678 433 678 381C678 122 678 87 678 87Z' fill='currentColor' stroke='currentColor' stroke-width='18'/></svg>)<svg style='display:inline-block;vertical-align:-1.56px' width='13' height='13' viewBox='0 0 1000 1000'><path d='M692 89C753 119 827 165 863 199L909 147C872 113 797 69 736 43ZM62 814 77 891C193 866 357 830 511 796L505 725C342 759 171 794 62 814ZM195 428H399V602H195ZM125 362V667H472V362ZM68 200V274H561C573 437 596 587 632 705C565 786 484 852 391 902C408 916 437 945 449 960C528 913 599 855 661 786C706 895 766 961 843 961C920 961 948 911 962 739C941 731 913 714 896 696C890 830 878 883 850 883C800 883 755 821 719 716C793 617 853 499 897 364L822 346C790 450 746 543 692 625C667 527 649 407 640 274H936V200H635C633 149 632 96 632 42H552C552 95 554 148 557 200Z' fill='currentColor' stroke='currentColor' stroke-width='18'/></svg><svg style='display:inline-block;vertical-align:-1.56px' width='13' height='13' viewBox='0 0 1000 1000'><path d='M407 591C384 667 342 754 280 805L335 846C400 788 441 694 466 614ZM643 626C672 693 701 781 709 840L770 817C760 760 732 673 699 607ZM766 599C823 675 883 780 907 849L970 817C944 748 884 647 825 571ZM533 483V877C533 889 529 893 515 893C502 893 459 894 409 892C418 913 427 940 430 960C497 960 541 959 568 948C595 937 603 917 603 878V483ZM85 103C143 132 213 179 246 213L291 152C256 119 186 76 129 49ZM38 374C98 400 170 443 205 475L248 414C212 382 140 343 79 319ZM60 905 127 947C171 858 221 741 259 641L199 599C157 707 100 831 60 905ZM327 97V167H548C537 213 522 258 503 301H281V372H466C416 453 347 523 254 569C268 583 290 610 300 626C414 567 494 477 550 372H676C732 472 826 564 922 610C933 592 956 566 971 552C888 517 807 449 754 372H954V301H584C601 258 615 213 627 167H920V97Z' fill='currentColor' stroke='currentColor' stroke-width='18'/></svg><svg style='display:inline-block;vertical-align:-1.56px' width='13' height='13' viewBox='0 0 1000 1000'><path d='M572 164V945H644V871H838V937H913V164ZM644 799V237H838V799ZM195 53 194 230H53V303H192C185 555 154 777 28 909C47 921 74 944 86 961C221 814 256 574 265 303H417C409 688 400 825 379 854C370 867 360 871 345 870C327 870 284 870 237 866C250 887 257 919 259 941C304 944 350 945 378 941C407 937 426 928 444 902C475 859 482 713 490 268C490 257 490 230 490 230H267L269 53Z' fill='currentColor' stroke='currentColor' stroke-width='18'/></svg><svg style='display:inline-block;vertical-align:-1.56px' width='13' height='13' viewBox='0 0 1000 1000'><path d='M634 359C705 409 793 480 834 527L894 481C850 435 762 366 691 319ZM317 43V519H392V43ZM121 77V487H194V77ZM616 42C580 189 515 329 429 417C447 428 479 451 491 462C541 406 585 332 622 249H944V181H650C665 141 678 99 689 56ZM160 579V865H46V933H957V865H849V579ZM230 865V644H364V865ZM434 865V644H570V865ZM639 865V644H776V865Z' fill='currentColor' stroke='currentColor' stroke-width='18'/></svg><svg style='display:inline-block;vertical-align:-1.56px' width='13' height='13' viewBox='0 0 1000 1000'><path d='M450 89V621H523V155H832V621H907V89ZM154 76C190 115 229 170 247 207L308 167C290 132 250 80 211 42ZM637 231V426C637 583 607 774 354 905C369 917 393 945 402 961C552 882 631 775 671 666V860C671 927 698 945 766 945H857C944 945 955 904 965 747C946 742 921 732 902 717C898 861 893 888 858 888H777C749 888 741 880 741 852V604H690C705 543 709 483 709 428V231ZM63 212V281H305C247 408 142 533 39 603C50 617 68 655 74 676C113 647 152 611 190 570V959H261V528C296 573 339 630 359 661L407 601C388 579 318 499 280 458C328 390 369 314 397 236L357 209L343 212Z' fill='currentColor' stroke='currentColor' stroke-width='18'/></svg>(<svg style='display:inline-block;vertical-align:-1.56px' width='9' height='13' viewBox='154 0 692 1000'><path d='M334 950H666V426H841V425L500 35L159 425V426H334ZM629 389V913H371V389H241V387L500 91L759 387V389Z' fill='currentColor' stroke='currentColor' stroke-width='18'/></svg><svg style='display:inline-block;vertical-align:-1.56px' width='9' height='13' viewBox='154 0 692 1000'><path d='M636 210C636 289 636 325 636 325C530 325 470 325 364 325C364 325 364 289 364 210C364 125 295 56 209 56C124 56 55 125 55 210C55 296 124 365 209 365C288 365 324 365 324 365C324 471 324 529 324 635C324 635 288 635 209 635C124 635 55 704 55 790C55 875 124 944 209 944C295 944 364 875 364 790C364 711 364 675 364 675C470 675 530 675 636 675C636 675 636 711 636 790C636 875 705 944 791 944C876 944 945 875 945 790C945 704 876 635 791 635C712 635 676 635 676 635C676 529 676 471 676 365C676 365 712 365 791 365C876 365 945 296 945 210C945 125 876 56 791 56C705 56 636 125 636 210ZM95 210C95 147 146 96 209 96C272 96 324 147 324 210C324 289 324 325 324 325C324 325 288 325 209 325C146 325 95 274 95 210ZM676 210C676 147 728 96 791 96C854 96 905 147 905 210C905 274 854 325 791 325C712 325 676 325 676 325C676 325 676 289 676 210ZM364 365H636C636 471 636 529 636 635C530 635 470 635 364 635C364 529 364 471 364 365ZM95 790C95 726 146 675 209 675C288 675 324 675 324 675C324 675 324 711 324 790C324 853 272 904 209 904C146 904 95 853 95 790ZM791 675C854 675 905 726 905 790C905 853 854 904 791 904C728 904 676 853 676 790C676 711 676 675 676 675C676 675 712 675 791 675Z' fill='currentColor' stroke='currentColor' stroke-width='18'/></svg><svg style='display:inline-block;vertical-align:-1.56px' width='9' height='13' viewBox='154 0 692 1000'><path d='M931 378V47H638V381C638 460 612 488 530 488C445 488 416 488 416 488C416 488 416 457 416 288L25 632L416 973C416 806 416 775 416 775C416 775 445 775 530 775C576 775 635 774 691 760C748 746 794 722 831 686C871 648 899 597 915 534C929 476 931 417 931 378ZM678 87H891C891 87 891 122 891 378C891 469 881 582 804 657C736 722 646 735 530 735H376C376 837 376 886 376 886C325 842 114 656 85 632C113 608 325 420 376 376C376 376 376 425 376 528H530C583 528 620 517 643 493C667 469 678 433 678 381C678 122 678 87 678 87Z' fill='currentColor' stroke='currentColor' stroke-width='18'/></svg>)</div><div class='a' style='left:398px;top:567px;width:1174px;height:21px;background:#2b2f38'></div><div class='a' style='left:405px;top:681px;width:492px;height:34px;border:2px solid #b9393c;border-radius:4px'></div><svg class='a' style='left:405px;top:572px' width='8' height='11' viewBox='0 0 8 11'><path d='M1.5 1 L6 5.5 L1.5 10' fill='none' stroke='#9da0a8' stroke-width='1.3'/></svg><svg class='a' style='left:421px;top:574px' width='17' height='9' viewBox='0 0 17 9'><g fill='none' stroke='#b4c6ca' stroke-width='1.5'><ellipse cx='4.4' cy='5' rx='3.4' ry='3'/><ellipse cx='12.6' cy='5' rx='3.4' ry='3'/><path d='M7.5 3.6 H9.5 M0.8 2.8 L1.8 2 M16.2 2.8 L15.2 2'/></g></svg><div class='t' style='left:441px;top:568px'><span style='color:#f08a8e'>parent</span> <span style='color:#a3a8b3'>=</span> <span style='color:#8a8b8e'>{Launcher$ExtClassLoader@504}</span></div><svg class='a' style='left:405px;top:592px' width='8' height='11' viewBox='0 0 8 11'><path d='M1.5 1 L6 5.5 L1.5 10' fill='none' stroke='#9da0a8' stroke-width='1.3'/></svg><svg class='a' style='left:424px;top:592px' width='12' height='12' viewBox='0 0 12 12'><g fill='#b8873f'><rect x='1' y='0' width='10' height='3'/><rect x='1' y='4' width='10' height='3'/><rect x='1' y='8' width='10' height='3'/></g></svg><div class='t' style='left:441px;top:588px'><span style='color:#f08a8e'>this</span> <span style='color:#a3a8b3'>=</span> <span style='color:#8a8b8e'>{Launcher$AppClassLoader@497}</span></div><svg class='a' style='left:423px;top:611px' width='14' height='14' viewBox='0 0 14 14'><circle cx='7' cy='7' r='6.5' fill='#3592c4'/><rect x='6.1' y='6' width='1.9' height='5' fill='#1a2026'/><rect x='6.1' y='2.8' width='1.9' height='1.9' fill='#1a2026'/></svg><div class='t' style='left:441px;top:608px'><span style='color:#c3c5cc'><svg style='display:inline-block;vertical-align:-1.55px' width='12.9' height='12.9' viewBox='0 0 1000 1000'><path d='M223 251C193 322 143 394 88 442C105 451 133 471 147 483C200 430 257 350 290 269ZM691 289C752 346 825 430 861 484L920 445C885 393 812 313 747 257ZM432 49C450 77 470 113 483 142H70V209H347V513H422V209H576V512H651V209H930V142H567C554 111 527 64 504 31ZM133 541V608H213C266 687 338 752 424 805C312 850 183 879 52 896C65 912 83 943 89 962C233 939 375 902 499 846C617 904 758 942 913 962C922 942 940 913 956 896C815 881 686 851 576 806C680 747 766 670 823 571L775 538L762 541ZM296 608H709C658 674 585 728 500 771C416 727 347 673 296 608Z' fill='currentColor' stroke='currentColor' stroke-width='18'/></svg><svg style='display:inline-block;vertical-align:-1.55px' width='12.9' height='12.9' viewBox='0 0 1000 1000'><path d='M250 215H747V270H250ZM250 117H747V171H250ZM177 72V315H822V72ZM52 358V415H949V358ZM230 607H462V665H230ZM535 607H777V665H535ZM230 507H462V563H230ZM535 507H777V563H535ZM47 877V935H955V877H535V819H873V766H535V711H851V460H159V711H462V766H131V819H462V877Z' fill='currentColor' stroke='currentColor' stroke-width='18'/></svg><svg style='display:inline-block;vertical-align:-1.55px' width='12.9' height='12.9' viewBox='0 0 1000 1000'><path d='M105 108C159 154 226 221 256 265L309 212C277 170 209 106 154 62ZM43 354V426H184V773C184 826 148 865 128 881C142 892 166 917 175 932C188 915 212 895 345 789C331 836 311 880 283 919C298 927 327 948 338 959C436 823 450 612 450 458V152H856V869C856 884 851 889 836 889C822 890 775 890 723 888C733 907 744 938 747 957C818 957 861 956 888 945C915 932 924 910 924 870V85H383V458C383 553 380 664 352 767C344 752 335 731 330 716L257 772V354ZM620 182V266H512V324H620V426H490V483H818V426H681V324H793V266H681V182ZM512 565V845H570V799H781V565ZM570 621H723V742H570Z' fill='currentColor' stroke='currentColor' stroke-width='18'/></svg><svg style='display:inline-block;vertical-align:-1.55px' width='12.9' height='12.9' viewBox='0 0 1000 1000'><path d='M120 105C171 149 235 213 265 254L317 202C287 162 222 102 170 59ZM777 84C819 128 865 189 885 229L940 192C918 153 871 95 829 52ZM50 354V426H189V786C189 829 159 858 141 869C154 884 172 916 179 934C194 916 221 898 392 783C385 768 376 739 371 719L260 791V354ZM671 45 677 248H346V320H680C698 697 745 954 869 957C907 957 947 915 967 746C953 740 921 720 907 705C901 803 889 859 871 859C809 856 770 629 754 320H959V248H751C749 183 747 115 747 45ZM360 819 381 890C465 865 574 833 679 802L669 735L552 768V536H646V466H378V536H483V787Z' fill='currentColor' stroke='currentColor' stroke-width='18'/></svg><svg style='display:inline-block;vertical-align:-1.55px' width='12.9' height='12.9' viewBox='0 0 1000 1000'><path d='M382 349V411H869V349ZM382 491V552H869V491ZM310 205V269H947V205ZM541 65C568 107 598 164 612 200L679 170C665 135 635 81 606 40ZM369 637V960H434V920H811V957H879V637ZM434 858V699H811V858ZM256 44C205 195 122 345 32 443C45 460 67 497 74 513C107 476 139 432 169 385V963H238V264C271 200 300 132 323 64Z' fill='currentColor' stroke='currentColor' stroke-width='18'/></svg><svg style='display:inline-block;vertical-align:-1.55px' width='12.9' height='12.9' viewBox='0 0 1000 1000'><path d='M266 330H730V410H266ZM266 468H730V549H266ZM266 193H730V273H266ZM262 678V841C262 921 293 942 409 942C433 942 614 942 639 942C736 942 761 912 771 784C750 780 718 769 701 757C696 859 688 873 634 873C594 873 443 873 413 873C349 873 337 868 337 840V678ZM763 688C809 751 857 837 874 892L945 860C926 805 877 721 830 660ZM148 676C124 739 85 825 45 880L114 913C151 855 187 767 212 704ZM419 640C470 687 528 754 553 799L614 761C587 718 530 654 478 609H805V133H506C521 107 538 76 553 45L465 30C457 59 441 100 428 133H194V609H473Z' fill='currentColor' stroke='currentColor' stroke-width='18'/></svg><svg style='display:inline-block;vertical-align:-1.55px' width='12.9' height='12.9' viewBox='0 0 1000 1000'><path d='M559 402C678 482 828 600 899 677L960 619C885 542 733 430 615 354ZM69 110V187H514C415 358 243 527 44 625C60 642 83 672 95 691C234 618 358 515 459 399V958H540V296C566 261 589 224 610 187H931V110Z' fill='currentColor' stroke='currentColor' stroke-width='18'/></svg><svg style='display:inline-block;vertical-align:-1.55px' width='12.9' height='12.9' viewBox='0 0 1000 1000'><path d='M56 111V186H747V851C747 872 740 878 718 880C694 880 612 881 532 877C544 899 558 936 563 958C662 958 732 958 772 945C811 932 825 906 825 852V186H948V111ZM231 405H494V635H231ZM158 333V787H231V707H568V333Z' fill='currentColor' stroke='currentColor' stroke-width='18'/></svg><svg style='display:inline-block;vertical-align:-1.55px' width='12.9' height='12.9' viewBox='0 0 1000 1000'><path d='M153 110V473C153 614 143 791 32 916C49 925 79 950 90 965C167 880 201 765 216 653H467V951H543V653H813V858C813 876 806 882 786 883C767 884 699 885 629 882C639 902 651 935 655 954C749 955 807 954 841 942C875 930 887 907 887 858V110ZM227 182H467V343H227ZM813 182V343H543V182ZM227 414H467V582H223C226 544 227 507 227 473ZM813 414V582H543V414Z' fill='currentColor' stroke='currentColor' stroke-width='18'/></svg></span></div><svg class='a' style='left:405px;top:632px' width='8' height='11' viewBox='0 0 8 11'><path d='M1.5 1 L6 5.5 L1.5 10' fill='none' stroke='#9da0a8' stroke-width='1.3'/></svg><svg class='a' style='left:423px;top:631px' width='14' height='14' viewBox='0 0 14 14'><circle cx='7' cy='7' r='7' fill='#b0853f'/><path d='M5.4 12 V4.6 H7.4 A2.1 2.1 0 0 1 7.4 8.8 H5.4' fill='none' stroke='#3a2a12' stroke-width='0.9'/></svg><div class='t' style='left:441px;top:628px'><span style='color:#f08a8e'>name</span> <span style='color:#a3a8b3'>=</span> <span style='color:#6ac26b'>"cn.itcast.jvm.t3.load.H"</span></div><svg class='a' style='left:423px;top:651px' width='14' height='14' viewBox='0 0 14 14'><circle cx='7' cy='7' r='7' fill='#b0853f'/><path d='M5.4 12 V4.6 H7.4 A2.1 2.1 0 0 1 7.4 8.8 H5.4' fill='none' stroke='#3a2a12' stroke-width='0.9'/></svg><div class='t' style='left:441px;top:648px'><span style='color:#f08a8e'>resolve</span> <span style='color:#a3a8b3'>=</span> <span style='color:#c3c5cc'>false</span></div><svg class='a' style='left:405px;top:672px' width='8' height='11' viewBox='0 0 8 11'><path d='M1.5 1 L6 5.5 L1.5 10' fill='none' stroke='#9da0a8' stroke-width='1.3'/></svg><svg class='a' style='left:424px;top:672px' width='12' height='12' viewBox='0 0 12 12'><g fill='#b8873f'><rect x='1' y='0' width='10' height='3'/><rect x='1' y='4' width='10' height='3'/><rect x='1' y='8' width='10' height='3'/></g></svg><div class='t' style='left:441px;top:668px'><span style='color:#f08a8e'>&lt;monitor&gt; (slot_3)</span> <span style='color:#a3a8b3'>=</span> <span style='color:#8a8b8e'>{Object@531}</span></div><svg class='a' style='left:405px;top:692px' width='8' height='11' viewBox='0 0 8 11'><path d='M1.5 1 L6 5.5 L1.5 10' fill='none' stroke='#9da0a8' stroke-width='1.3'/></svg><svg class='a' style='left:424px;top:692px' width='12' height='12' viewBox='0 0 12 12'><g fill='#b8873f'><rect x='1' y='0' width='10' height='3'/><rect x='1' y='4' width='10' height='3'/><rect x='1' y='8' width='10' height='3'/></g></svg><div class='t' style='left:441px;top:688px'><span style='color:#f08a8e'>c (slot_4)</span> <span style='color:#a3a8b3'>=</span> <span style='color:#8a8b8e'>{Class@555}</span> <span style='color:#c3c5cc'>"class cn.itcast.jvm.t3.load.H"</span> <span style='color:#5a8ee8;margin-left:4px'>... <svg style='display:inline-block;vertical-align:-1.56px' width='13' height='13' viewBox='0 0 1000 1000'><path d='M211 698C274 750 345 827 374 879L430 829C399 780 331 710 270 659H648V869C648 884 642 889 622 890C603 890 531 891 457 889C468 908 480 936 484 956C580 956 641 956 677 945C713 935 725 915 725 871V659H944V589H725V511H648V589H62V659H256ZM135 110V372C135 466 185 486 350 486C387 486 709 486 749 486C875 486 908 462 921 359C898 356 868 347 848 336C840 410 826 424 744 424C674 424 397 424 344 424C233 424 213 413 213 371V318H826V80H135ZM213 146H752V251H213Z' fill='currentColor' stroke='currentColor' stroke-width='18'/></svg><svg style='display:inline-block;vertical-align:-1.56px' width='13' height='13' viewBox='0 0 1000 1000'><path d='M200 288C222 333 248 393 259 432L309 410C297 373 271 314 248 269ZM198 596C224 644 256 709 269 750L320 727C305 687 273 624 245 575ZM596 51C621 99 652 164 665 206L738 181C723 140 692 77 665 29ZM439 206V274H949V206ZM527 372V590C527 694 515 828 417 923C435 931 464 952 475 964C579 862 597 708 597 591V439H769V831C769 900 773 917 788 931C802 944 822 949 841 949C852 949 875 949 886 949C904 949 922 946 934 937C946 928 954 915 959 895C963 875 967 818 968 772C950 767 930 756 917 745C916 795 915 834 913 852C911 868 908 877 904 881C900 884 892 885 884 885C877 885 865 885 860 885C853 885 848 884 844 881C841 877 839 862 839 836V372ZM346 221V476H176V221ZM40 476V538H110C110 663 104 820 34 930C50 937 80 955 92 967C165 852 176 673 176 538H346V871C346 883 341 887 329 887C317 888 279 888 236 887C246 904 256 934 258 952C320 952 356 951 381 939C404 928 412 907 412 871V159H265C278 126 293 86 306 48L230 33C223 69 211 120 199 159H110V476Z' fill='currentColor' stroke='currentColor' stroke-width='18'/></svg></span></div><svg class='a' style='left:424px;top:712px' width='13' height='12' viewBox='0 0 13 12'><rect x='0' y='0' width='13' height='12' fill='#2389a8'/><text x='6.5' y='9.5' font-family='Liberation Sans' font-size='8.5' text-anchor='middle' fill='#0e3f50'>01</text></svg><div class='t' style='left:441px;top:708px'><span style='color:#f08a8e'>t0 (slot_5)</span> <span style='color:#a3a8b3'>=</span> <span style='color:#c3c5cc'>108948237915041</span></div><svg class='a' style='left:424px;top:732px' width='13' height='12' viewBox='0 0 13 12'><rect x='0' y='0' width='13' height='12' fill='#2389a8'/><text x='6.5' y='9.5' font-family='Liberation Sans' font-size='8.5' text-anchor='middle' fill='#0e3f50'>01</text></svg><div class='t' style='left:441px;top:728px'><span style='color:#f08a8e'>t1 (slot_7)</span> <span style='color:#a3a8b3'>=</span> <span style='color:#c3c5cc'>109192469133083</span></div></body></html>
